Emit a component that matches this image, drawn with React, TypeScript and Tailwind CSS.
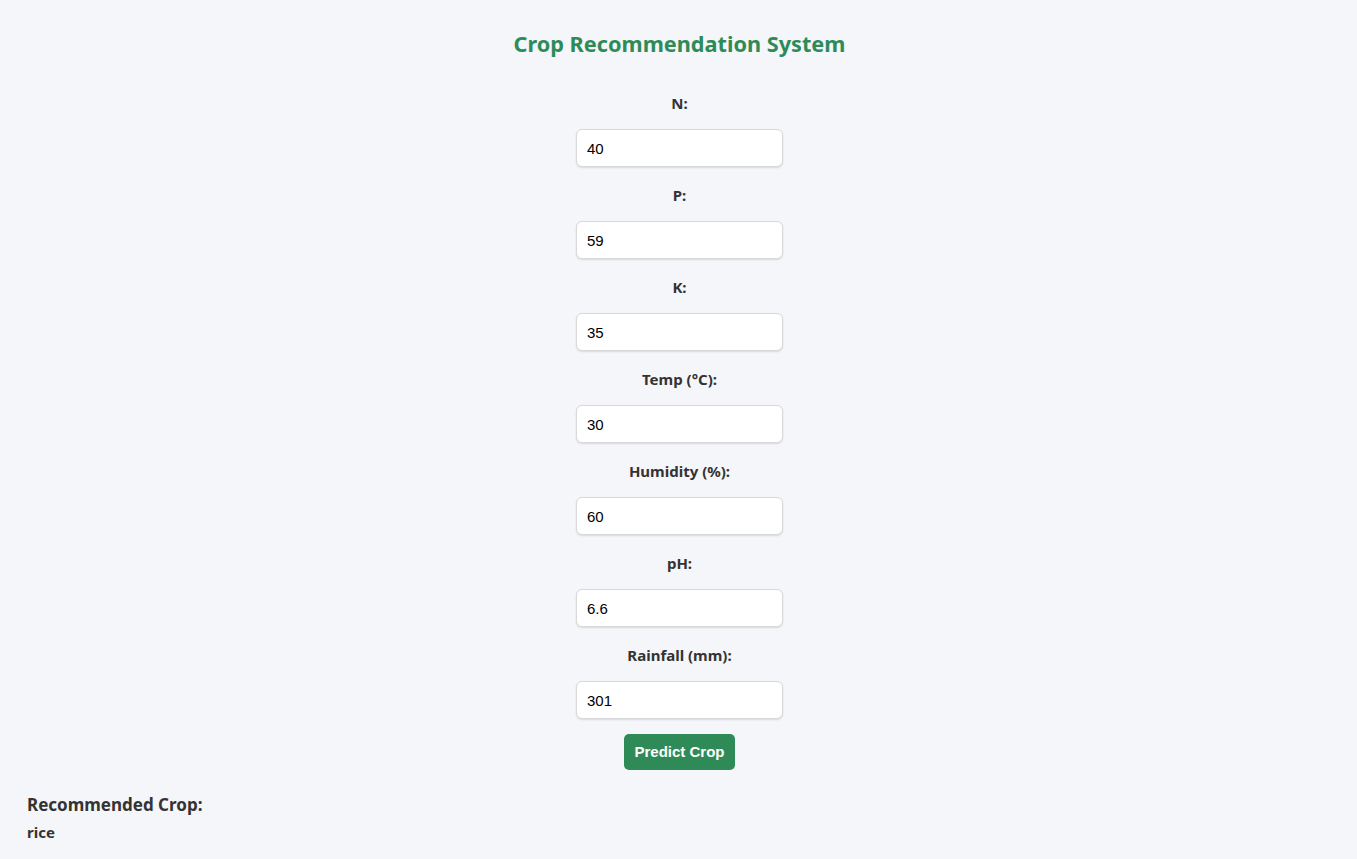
import { useState } from "react";

const fields = [
  { key: "N", label: "N:", value: "40" },
  { key: "P", label: "P:", value: "59" },
  { key: "K", label: "K:", value: "35" },
  { key: "temp", label: "Temp (°C):", value: "30" },
  { key: "humidity", label: "Humidity (%):", value: "60" },
  { key: "ph", label: "pH:", value: "6.6" },
  { key: "rainfall", label: "Rainfall (mm):", value: "301" },
];

export default function App() {
  const [values, setValues] = useState<Record<string, string>>(
    Object.fromEntries(fields.map((f) => [f.key, f.value]))
  );

  return (
    <div className="min-h-[859px] bg-[#f5f6fa] font-['Noto_Sans',sans-serif] text-[#333]">
      <h1 className="pt-[29px] pl-[2px] text-center text-[21.7px] leading-[30px] font-bold text-[#2e8b57]">
        Crop Recommendation System
      </h1>

      <form className="mt-[34px] flex flex-col items-center pl-[2px]" onSubmit={(e) => e.preventDefault()}>
        {fields.map((f) => (
          <div key={f.key} className="flex flex-col items-center">
            <label className="text-[15px] leading-[20px] font-bold text-[#333]">{f.label}</label>
            <input
              type="text"
              value={values[f.key]}
              onChange={(e) => setValues({ ...values, [f.key]: e.target.value })}
              className="mt-4 mb-[18px] h-[38px] w-[207px] rounded-md border border-[#d9d9d9] bg-white px-[10px] font-['Liberation_Sans',sans-serif] text-[15px] text-black shadow-[0_1px_2px_rgba(0,0,0,0.12)] outline-none"
            />
          </div>
        ))}
        <button
          type="submit"
          className="-mt-[3px] h-[36px] w-[111px] rounded-[5px] bg-[#2e8b57] font-['Liberation_Sans',sans-serif] text-[15px] font-bold text-white"
        >
          Predict Crop
        </button>
      </form>

      <div className="px-[27px] pt-[23px]">
        <h3 className="text-[17px] leading-[24px] font-bold text-[#333]">Recommended Crop:</h3>
        <p className="mt-[5px] text-[15px] leading-[20px] font-bold text-[#333]">rice</p>
      </div>
    </div>
  );
}
